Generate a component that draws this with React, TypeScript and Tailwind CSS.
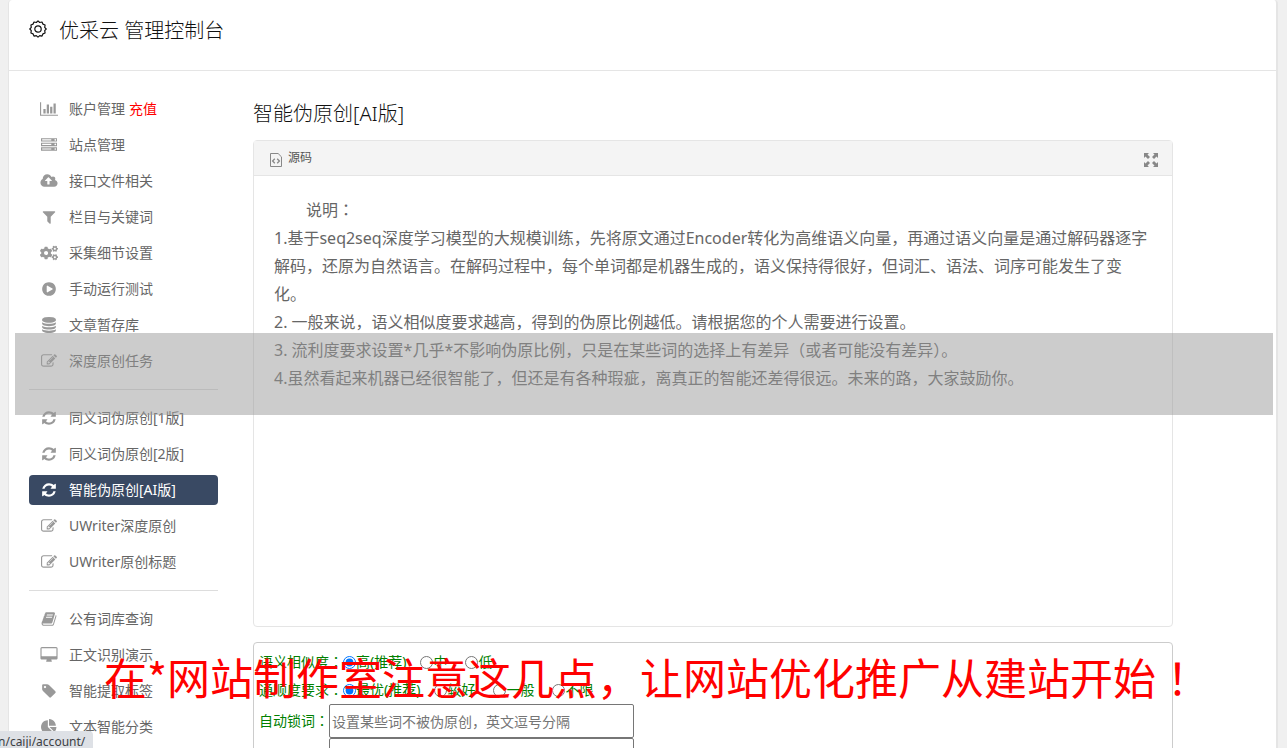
import type { ReactNode } from "react";
import { FaCogs } from "react-icons/fa";

const GLYPHS = {
  chart: {
    box: "0 0 2048 1792",
    d: "M640 896v512h-256v-512h256zm384-512v1024h-256v-1024h256zm1024 1152v128h-2048v-1536h128v1408h1920zm-640-896v768h-256v-768h256zm384-384v1152h-256v-1152h256z",
  },
  server: {
    box: "0 0 1792 1792",
    d: "M128 1408h1024v-128h-1024v128zm0-512h1024v-128h-1024v128zm1568 448q0-40-28-68t-68-28-68 28-28 68 28 68 68 28 68-28 28-68zm-1568-960h1024v-128h-1024v128zm1568 448q0-40-28-68t-68-28-68 28-28 68 28 68 68 28 68-28 28-68zm0-512q0-40-28-68t-68-28-68 28-28 68 28 68 68 28 68-28 28-68zm96 832v384h-1792v-384h1792zm0-512v384h-1792v-384h1792zm0-512v384h-1792v-384h1792z",
  },
  cloud: {
    box: "0 0 1920 1792",
    d: "M1280 864q0-14-9-23l-352-352q-9-9-23-9t-23 9l-351 351q-10 12-10 24 0 14 9 23t23 9h224v352q0 13 9.5 22.5t22.5 9.5h192q13 0 22.5-9.5t9.5-22.5v-352h224q13 0 22.5-9.5t9.5-22.5zm640 288q0 159-112.5 271.5t-271.5 112.5h-1088q-185 0-316.5-131.5t-131.5-316.5q0-130 70-240t188-165q-2-30-2-43 0-212 150-362t362-150q156 0 285.5 87t188.5 231q71-62 166-62 106 0 181 75t75 181q0 76-41 138 130 31 213.5 135.5t83.5 238.5z",
  },
  filter: {
    box: "0 0 1792 1792",
    d: "M1595 295q17 41-14 70l-493 493v742q0 42-39 59-13 5-25 5-27 0-45-19l-256-256q-19-19-19-45v-486l-493-493q-31-29-14-70 17-39 59-39h1280q42 0 59 39z",
  },
  play: {
    box: "0 0 1792 1792",
    d: "M896 128q209 0 385.5 103t279.5 279.5 103 385.5-103 385.5-279.5 279.5-385.5 103-385.5-103-279.5-279.5-103-385.5 103-385.5 279.5-279.5 385.5-103zm384 823q32-18 32-55t-32-55l-544-320q-31-19-64-1-32 19-32 56v640q0 37 32 56 16 8 32 8 17 0 32-9z",
  },
  database: {
    box: "0 0 1792 1792",
    d: "M896 768q237 0 443-43t325-127v170q0 69-103 128t-280 93.5-385 34.5-385-34.5-280-93.5-103-128v-170q119 84 325 127t443 43zm0 768q237 0 443-43t325-127v170q0 69-103 128t-280 93.5-385 34.5-385-34.5-280-93.5-103-128v-170q119 84 325 127t443 43zm0-384q237 0 443-43t325-127v170q0 69-103 128t-280 93.5-385 34.5-385-34.5-280-93.5-103-128v-170q119 84 325 127t443 43zm0-1152q208 0 385 34.5t280 93.5 103 128v128q0 69-103 128t-280 93.5-385 34.5-385-34.5-280-93.5-103-128v-128q0-69 103-128t280-93.5 385-34.5z",
  },
  edit: {
    box: "0 0 1792 1792",
    d: "M888 1184l116-116-152-152-116 116v56h96v96h56zm440-720q-16-16-33 1l-350 350q-17 17-1 33t33-1l350-350q17-17 1-33zm80 594v190q0 119-84.5 203.5t-203.5 84.5h-832q-119 0-203.5-84.5t-84.5-203.5v-832q0-119 84.5-203.5t203.5-84.5h832q63 0 117 25 15 7 18 23 3 17-9 29l-49 49q-14 14-32 8-23-6-45-6h-832q-66 0-113 47t-47 113v832q0 66 47 113t113 47h832q66 0 113-47t47-113v-126q0-13 9-22l64-64q15-15 35-7t20 29zm-96-738l288 288-672 672h-288v-288zm444 132l-92 92-288-288 92-92q28-28 68-28t68 28l152 152q28 28 28 68t-28 68z",
  },
  refresh: {
    box: "0 0 1792 1792",
    d: "M1639 1056q0 5-1 7-64 268-268 434.5t-478 166.5q-146 0-282.5-55t-243.5-157l-129 129q-19 19-45 19t-45-19-19-45v-448q0-26 19-45t45-19h448q26 0 45 19t19 45-19 45l-137 137q71 66 161 102t187 36q134 0 250-65t186-179q11-17 53-117 8-23 30-23h192q13 0 22.5 9.5t9.5 22.5zm25-800v448q0 26-19 45t-45 19h-448q-26 0-45-19t-19-45 19-45l138-138q-148-137-349-137-134 0-250 65t-186 179q-11 17-53 117-8 23-30 23h-199q-13 0-22.5-9.5t-9.5-22.5v-7q65-268 270-434.5t480-166.5q146 0 284 55.5t245 156.5l130-129q19-19 45-19t45 19 19 45z",
  },
  book: {
    box: "0 0 1792 1792",
    d: "M1703 478q40 57 18 129l-275 906q-19 64-76.5 107.5t-122.5 43.5h-923q-77 0-148.5-53.5t-99.5-131.5q-24-67-2-127 0-4 3-27t4-37q1-8-3-21.5t-3-19.5q2-11 8-21t16.5-23.5 16.5-23.5q23-38 45-91.5t30-91.5q3-10 .5-30t-.5-28q3-11 17-28t17-23q21-36 42-92t25-90q1-9-2.5-32t.5-28q4-13 22-30.5t22-22.5q19-26 42.5-84.5t27.5-96.5q1-8-3-25.5t-2-26.5q2-8 9-18t18-23 17-21q8-12 16.5-30.5t15-35 16-36 19.5-32 26.5-23.5 36-11.5 47.5 5.5l-1 3q38-9 51-9h761q74 0 114 56t18 130l-274 906q-36 119-71.5 153.5t-128.5 34.5h-869q-27 0-38 15-11 16-1 43 24 70 144 70h923q29 0 56-15.5t35-41.5l300-987q7-22 5-57 38 15 59 43zm-1064 2q-4 13 2 22.5t20 9.5h608q13 0 25.5-9.5t16.5-22.5l21-64q4-13-2-22.5t-20-9.5h-608q-13 0-25.5 9.5t-16.5 22.5zm-83 256q-4 13 2 22.5t20 9.5h608q13 0 25.5-9.5t16.5-22.5l21-64q4-13-2-22.5t-20-9.5h-608q-13 0-25.5 9.5t-16.5 22.5z",
  },
  desktop: {
    box: "0 0 1920 1792",
    d: "M1792 992v-832q0-13-9.5-22.5t-22.5-9.5h-1600q-13 0-22.5 9.5t-9.5 22.5v832q0 13 9.5 22.5t22.5 9.5h1600q13 0 22.5-9.5t9.5-22.5zm128-832v1088q0 66-47 113t-113 47h-544q0 37 16 77.5t32 71 16 43.5q0 26-19 45t-45 19h-512q-26 0-45-19t-19-45q0-14 16-44t32-70 16-78h-544q-66 0-113-47t-47-113v-1088q0-66 47-113t113-47h1600q66 0 113 47t47 113z",
  },
  tag: {
    box: "0 0 1792 1792",
    d: "M576 448q0-53-37.5-90.5t-90.5-37.5-90.5 37.5-37.5 90.5 37.5 90.5 90.5 37.5 90.5-37.5 37.5-90.5zm1067 576q0 53-37 90l-491 492q-39 37-91 37-53 0-90-37l-715-716q-38-37-64.5-101t-26.5-117v-416q0-52 38-90t90-38h416q53 0 117 26.5t102 64.5l715 714q37 39 37 91z",
  },
  pie: {
    box: "0 0 1792 1792",
    d: "M768 890l546 546q-106 108-247.5 168t-298.5 60q-209 0-385.5-103t-279.5-279.5-103-385.5 103-385.5 279.5-279.5 385.5-103v762zm187 6h773q0 157-60 298.5t-168 247.5zm709-128h-768v-768q209 0 385.5 103t279.5 279.5 103 385.5z",
  },
};

type Item = {
  icon: keyof typeof GLYPHS | "cogs";
  label: string;
  extra?: string;
  active?: boolean;
};

const MENU: Item[][] = [
  [
    { icon: "chart", label: "账户管理", extra: "充值" },
    { icon: "server", label: "站点管理" },
    { icon: "cloud", label: "接口文件相关" },
    { icon: "filter", label: "栏目与关键词" },
    { icon: "cogs", label: "采集细节设置" },
    { icon: "play", label: "手动运行测试" },
    { icon: "database", label: "文章暂存库" },
    { icon: "edit", label: "深度原创任务" },
  ],
  [
    { icon: "refresh", label: "同义词伪原创[1版]" },
    { icon: "refresh", label: "同义词伪原创[2版]" },
    { icon: "refresh", label: "智能伪原创[AI版]", active: true },
    { icon: "edit", label: "UWriter深度原创" },
    { icon: "edit", label: "UWriter原创标题" },
  ],
  [
    { icon: "book", label: "公有词库查询" },
    { icon: "desktop", label: "正文识别演示" },
    { icon: "tag", label: "智能提取标签" },
    { icon: "pie", label: "文本智能分类" },
  ],
];

const NOTES = [
  "1.基于seq2seq深度学习模型的大规模训练，先将原文通过Encoder转化为高维语义向量，再通过语义向量是通过解码器逐字解码，还原为自然语言。在解码过程中，每个单词都是机器生成的，语义保持得很好，但词汇、语法、词序可能发生了变化。",
  "2. 一般来说，语义相似度要求越高，得到的伪原比例越低。请根据您的个人需要进行设置。",
  "3. 流利度要求设置*几乎*不影响伪原比例，只是在某些词的选择上有差异（或者可能没有差异）。",
  "4.虽然看起来机器已经很智能了，但还是有各种瑕疵，离真正的智能还差得很远。未来的路，大家鼓励你。",
];

export default function App() {
  return (
    <div className="relative h-screen overflow-hidden bg-[#f0f0f0] pr-[9px] pl-2 font-['Noto_Sans','Noto_Sans_CJK_SC',sans-serif] text-sm text-[#666]">
      <div className="min-h-full rounded-t border-r-2 border-l border-[#e5e5e5] bg-white">
        <Header />
        <div className="flex items-start pt-[23px] pl-5">
          <Sidebar />
          <main className="ml-[35px] max-w-[920px] flex-1">
            <h2 className="text-xl leading-10 font-light text-[#111]">智能伪原创[AI版]</h2>
            <Editor />
            <Options />
          </main>
        </div>
      </div>
      <div className="pointer-events-none absolute top-[333px] right-3.5 left-[15px] h-[82px] bg-[#999]/50" />
      <p className="pointer-events-none absolute top-[644px] left-[104px] font-['Noto_Sans_CJK_SC',sans-serif] text-[43px] leading-[64px] whitespace-nowrap text-[#f00]">
        <Zh text="在*网站制作室注意这几点，让网站优化推广从建站开始！" />
      </p>
      <div className="absolute bottom-0 left-0 h-[17px] rounded-tr bg-[#dee1e6] pr-2 text-xs leading-[21px] text-[#3c4043]">
        <span className="-ml-0.5">n/caiji/account/</span>
      </div>
    </div>
  );
}

function Header() {
  return (
    <header className="flex h-[71px] items-start gap-3 border-b border-[#e5e5e5] pt-4 pl-5 text-[#111]">
      <svg viewBox="0 0 18 18" className="mt-1 size-[18px]" fill="none" stroke="currentColor" strokeWidth="1.2">
        <path d="M9 .9l1.700 1.600 2.300-.5.9 2.100 2.200.9-.4 2.300L17.200 9l-1.500 1.700.4 2.300-2.200.9-.9 2.200-2.300-.5L9 17.100l-1.700-1.500-2.300.5-.9-2.200-2.200-.9.4-2.300L.8 9l1.500-1.700L1.900 5l2.200-.9L5 2l2.300.5z" strokeLinejoin="round" />
        <circle cx="9" cy="9" r="3.2" />
      </svg>
      <h1 className="text-xl leading-[30px] font-light">优采云 管理控制台</h1>
    </header>
  );
}

function Sidebar() {
  return (
    <nav className="w-[189px] shrink-0">
      {MENU.map((group, i) => (
        <div key={group[0].label}>
          {i > 0 && <hr className="my-[13px] border-[#ddd]" />}
          <ul className="flex flex-col gap-1.5">
            {group.map((item) => (
              <li key={item.label}>
                <MenuLink item={item} />
              </li>
            ))}
          </ul>
        </div>
      ))}
    </nav>
  );
}

function MenuLink({ item }: { item: Item }) {
  return (
    <a
      href="#"
      className={
        item.active
          ? "flex h-[30px] items-center rounded bg-[#394963] pl-2.5 text-white"
          : "flex h-[30px] items-center pl-2.5"
      }
    >
      <span className={item.active ? "flex w-5 justify-center" : "flex w-5 justify-center text-[#999]"}>
        {item.icon === "cogs" ? <FaCogs size={18} /> : <Glyph name={item.icon} />}
      </span>
      <span className="ml-2.5">{item.label}</span>
      {item.extra && <span className="ml-1 text-[#f00]">{item.extra}</span>}
    </a>
  );
}

function Glyph({ name }: { name: keyof typeof GLYPHS }) {
  return (
    <svg viewBox={GLYPHS[name].box} className="h-4 w-[18px]" fill="currentColor" aria-hidden>
      <path d={GLYPHS[name].d} />
    </svg>
  );
}

// Full-width colons and exclamation marks sit in the middle of their cell.
function Zh({ text }: { text: string }): ReactNode {
  return text.split(/([：！])/).map((part, i) =>
    i % 2 ? (
      <span key={i} className="font-['Noto_Sans_CJK_TC',sans-serif] leading-none">
        {part}
      </span>
    ) : (
      part
    ),
  );
}

function Editor() {
  return (
    <section className="mt-1.5 min-h-[487px] rounded border border-[#e5e5e5]">
      <div className="flex h-[35px] items-center justify-between border-b border-[#e5e5e5] bg-[#f4f4f4] pr-3.5 pl-4">
        <div className="flex items-center gap-1.5 text-xs text-[#555]">
          <svg viewBox="0 0 12 14" className="mt-1 h-3.5 w-3" fill="none" stroke="#888">
            <path d="M.5.5h7.6l3.4 3.4v9.6H.5z" />
            <path d="M4.800 5.800L2.600 8l2.200 2.200M7.200 5.800L9.400 8l-2.200 2.200" strokeWidth="1.3" />
          </svg>
          <span>源码</span>
        </div>
        <button type="button" aria-label="全屏" className="mt-1 text-[#888]">
          <svg viewBox="0 0 14 14" className="size-3.5" fill="currentColor">
            <path d="M0 0h5L3.500 1.500 6 4 4 6 1.500 3.500 0 5zM14 0v5l-1.500-1.500L10 6 8 4l2.500-2.500L9 0zM0 14V9l1.500 1.500L4 8l2 2-2.500 2.500L5 14zM14 14H9l1.500-1.500L8 10l2-2 2.500 2.500L14 9z" />
          </svg>
        </button>
      </div>
      <div className="p-5 text-base leading-7">
        <p className="indent-8">
          <Zh text="说明：" />
        </p>
        {NOTES.map((note) => (
          <p key={note}>{note}</p>
        ))}
      </div>
    </section>
  );
}

function Options() {
  return (
    <form className="mt-[15px] rounded border border-[#ccc] px-[5px] pt-[5px] pb-5 text-[green]">
      <RadioRow name="similarity" legend="语义相似度：" options={["高(推荐)", "中", "低"]} />
      <RadioRow name="fluency" legend="通顺度要求：" options={["最优(推荐)", "较好", "一般", "不限"]} />
      <div className="flex items-center">
        <label htmlFor="lock" className="w-[70px]">
          <Zh text="自动锁词：" />
        </label>
        <input
          id="lock"
          placeholder="设置某些词不被伪原创，英文逗号分隔"
          className="h-[34px] w-[305px] rounded-xs border border-[#767676] px-0.5 placeholder:text-[#757575]"
        />
      </div>
      <div className="flex pl-[70px]">
        <input aria-label="补充锁词" className="h-[34px] w-[305px] rounded-xs border border-[#767676] px-0.5" />
      </div>
    </form>
  );
}

function RadioRow({ name, legend, options }: { name: string; legend: string; options: string[] }) {
  return (
    <div role="radiogroup" aria-label={legend} className="flex h-7 items-center">
      <span className="w-[84px]">
        <Zh text={legend} />
      </span>
      {options.map((label, i) => (
        <label key={label} className={i === 0 ? "mr-3.5 flex items-center" : "mr-[18px] flex items-center"}>
          <input type="radio" name={name} defaultChecked={i === 0} className="size-[13px]" />
          {label}
        </label>
      ))}
    </div>
  );
}
